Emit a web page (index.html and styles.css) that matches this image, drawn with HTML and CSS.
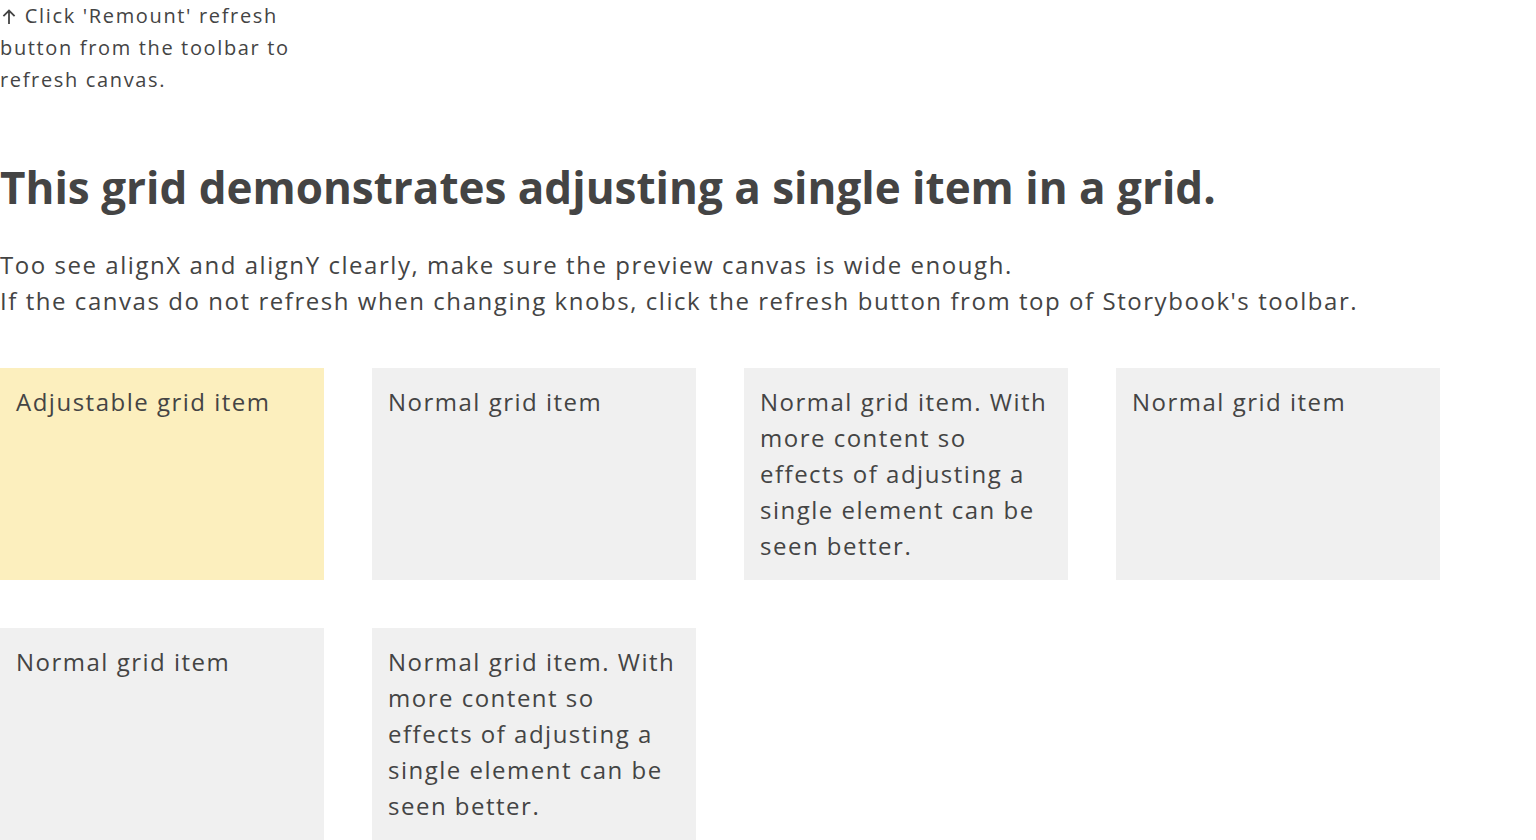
FILE: index.html
```html
<!DOCTYPE html>
<html>
<head>
<meta charset="utf-8">
<link rel="stylesheet" href="styles.css">
</head>
<body>
<div class="note"><svg class="arrow" width="14" height="15" viewBox="0 0 14 15" aria-hidden="true"><path d="M7 15V1.6M1.4 7.2L7 1.6l5.6 5.6" fill="none" stroke="#444" stroke-width="1.8"/></svg> Click 'Remount' refresh button from the toolbar to refresh canvas.</div>
<h1 class="title">This grid demonstrates adjusting a single item in a grid.</h1>
<p class="desc">Too see alignX and alignY clearly, make sure the preview canvas is wide enough.<br>If the canvas do not refresh when changing knobs, click the refresh button from top of Storybook's toolbar.</p>
<div class="grid">
  <div class="item item-adjustable">Adjustable grid item</div>
  <div class="item">Normal grid item</div>
  <div class="item">Normal grid item. With more content so effects of adjusting a single element can be seen better.</div>
  <div class="item">Normal grid item</div>
  <div class="item">Normal grid item</div>
  <div class="item">Normal grid item. With more content so effects of adjusting a single element can be seen better.</div>
</div>
</body>
</html>
```
FILE: styles.css
```css
html, body {
  margin: 0;
  padding: 0;
  background: #fff;
}
body {
  font-family: "Open Sans", "Noto Sans", sans-serif;
  color: #444;
}
.note {
  width: 300px;
  font-size: 20px;
  line-height: 32px;
  letter-spacing: 1.65px;
}
.arrow {
  margin-left: 2px;
  margin-right: 2px;
  vertical-align: -1px;
}
.title {
  margin: 59px 0 0;
  font-size: 44px;
  line-height: 64px;
  font-weight: 700;
}
.desc {
  margin: 28px 0 0;
  font-size: 24px;
  line-height: 36px;
  letter-spacing: 1.55px;
}
.grid {
  margin-top: 49px;
  display: grid;
  grid-template-columns: repeat(4, 324px);
  gap: 48px;
}
.item {
  background: #f0f0f0;
  padding: 16px;
  font-size: 24px;
  line-height: 36px;
  letter-spacing: 1.5px;
}
.item-adjustable {
  background: #fcefbe;
}
```
